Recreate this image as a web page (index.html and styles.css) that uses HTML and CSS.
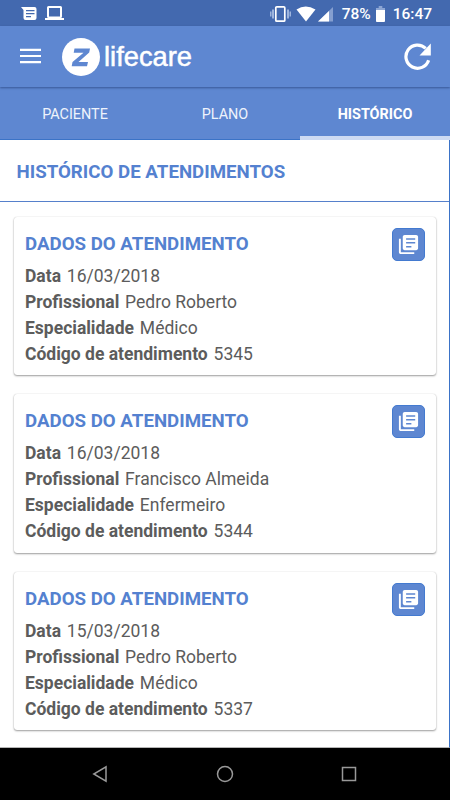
FILE: index.html
```html
<!DOCTYPE html>
<html lang="pt-BR">
<head>
<meta charset="utf-8">
<title>Lifecare</title>
<link rel="stylesheet" href="styles.css">
</head>
<body>
<svg class="defs" width="0" height="0">
  <symbol id="library" viewBox="0 0 24 24"><path fill="#fff" d="M4 6H2v14c0 1.100.9 2 2 2h14v-2H4V6zm16-4H8c-1.100 0-2 .9-2 2v12c0 1.100.9 2 2 2h12c1.100 0 2-.9 2-2V4c0-1.100-.9-2-2-2zm-1 9H9.500V9.500h9.500zm-4 4H9.500v-1.500h5.500zm4-8H9.500V5.500h9.500z"/></symbol>
</svg>
<div class="status">
  <svg class="notes" width="46" height="16" viewBox="0 0 46 16" fill="#fff">
    <path fill-rule="evenodd" d="M0 1H13.500q2 0 2 2v9q0 2-2 2H4.500q-2 0-2-2V4zM5 4v1.200h8.500V4zm0 3v1.200h8.500V7zm0 3v1.200h5V10z"/>
    <path fill-rule="evenodd" d="M27.500 0h12q1.500 0 1.500 1.500v9q0 1.500-1.500 1.500h-12q-1.500 0-1.500-1.500v-9Q26 0 27.500 0zM28 2v8.500h11V2zM24 12h19v2h-19z"/>
  </svg>
  <svg class="signals" width="66" height="18" viewBox="0 0 66 18">
    <g fill="#9db4dd"><path d="M2 4.500h2v9H2zM17 4.500h2v9h-2z"/><path d="M0 6.500h1.500v5H0zM19.500 6.500H21v5h-1.500z"/></g>
    <rect x="5.800" y="1.800" width="9" height="14.400" rx="1" fill="none" stroke="#fff" stroke-width="1.700"/>
    <path fill="#fff" d="M26.500 4.500Q35.500-1.500 45.500 4.500L36 16.500z"/>
    <path fill="#859fd0" d="M63 2v14.500H48z"/><path fill="#fff" d="M59 6v10.500H48z"/>
  </svg>
  <span class="percent">78%</span>
  <svg class="battery" width="9" height="16" viewBox="0 0 10 16" preserveAspectRatio="none"><path fill="#8ca5d3" d="M3 0h4v2h3v3H0V2h3z"/><path fill="#fff" d="M0 4h10v11q0 1-1 1H1q-1 0-1-1z"/></svg>
  <span class="clock">16:47</span>
</div>
<header class="appbar">
  <svg class="menu" width="21" height="16" viewBox="0 0 21 16"><path fill="#fff" d="M0 .8h21V3H0zM0 6.900h21v2.200H0zM0 13h21v2.200H0z"/></svg>
  <svg class="mark" width="38" height="38" viewBox="0 0 38 38"><circle cx="19" cy="19" r="19" fill="#fff"/><path fill="#5e87d1" d="M12.500 10.500H28L27.200 14.500 16.500 24h9.500l-1 4.300H9.700L10.500 24l11-9.300H11.700z"/></svg>
  <span class="brand">lifecare</span>
  <svg class="reload" width="27" height="27" viewBox="0 0 27 27"><path fill="none" stroke="#fff" stroke-width="3.200" d="M24.600 17.200A11.600 11.600 0 1 1 21.700 5.400"/><path fill="#fff" d="M26.800.5v12H15.500z"/></svg>
</header>
<nav class="tabs">
  <span class="tab">PACIENTE</span><span class="tab">PLANO</span><span class="tab active">HISTÓRICO</span>
</nav>
<main class="content">
  <h1>HISTÓRICO DE ATENDIMENTOS</h1>
  <div class="cards">
    <section class="card">
      <div class="info"><h2>DADOS DO ATENDIMENTO</h2>
        <p><b>Data</b> 16/03/2018</p><p><b>Profissional</b> Pedro Roberto</p><p><b>Especialidade</b> Médico</p><p><b>Código de atendimento</b> 5345</p></div>
      <span class="button"><svg width="23" height="23"><use href="#library"/></svg></span>
    </section>
    <section class="card">
      <div class="info"><h2>DADOS DO ATENDIMENTO</h2>
        <p><b>Data</b> 16/03/2018</p><p><b>Profissional</b> Francisco Almeida</p><p><b>Especialidade</b> Enfermeiro</p><p><b>Código de atendimento</b> 5344</p></div>
      <span class="button"><svg width="23" height="23"><use href="#library"/></svg></span>
    </section>
    <section class="card">
      <div class="info"><h2>DADOS DO ATENDIMENTO</h2>
        <p><b>Data</b> 15/03/2018</p><p><b>Profissional</b> Pedro Roberto</p><p><b>Especialidade</b> Médico</p><p><b>Código de atendimento</b> 5337</p></div>
      <span class="button"><svg width="23" height="23"><use href="#library"/></svg></span>
    </section>
  </div>
</main>
<footer class="navbar">
  <svg width="16" height="18" viewBox="0 0 16 18"><path d="M14 1.800v14.400L1.800 9z"/></svg>
  <svg width="18" height="18" viewBox="0 0 18 18"><circle cx="9" cy="9" r="7.500"/></svg>
  <svg width="16" height="16" viewBox="0 0 16 16"><rect x="1.500" y="1.500" width="13" height="13"/></svg>
</footer>
</body>
</html>
```
FILE: styles.css
```css
* { box-sizing: border-box; }
body { margin: 0; width: 450px; height: 800px; overflow: hidden; display: flex; flex-direction: column; background: #fff; font-family: Roboto, sans-serif; }
svg { display: block; flex: none; }
.defs { position: absolute; }
.status { height: 26px; flex: none; background: #4369af; color: #fff; display: flex; align-items: center; padding: 1px 18px 0 21px; font-size: 15.500px; font-weight: 500; }
.signals { margin-left: auto; }
.percent { margin-left: 6px; }
.battery { margin: 0 8px 0 5px; }
.appbar { height: 61px; flex: none; background: #5e87d1; display: flex; align-items: center; padding: 0 19px 0 20px; box-shadow: 0 1px 2px rgba(30, 55, 110, .6); position: relative; }
.menu { margin-bottom: 1px; }
.mark { margin-left: 20.500px; }
.brand { margin-left: 4.500px; color: #fff; font: 27.300px/30px "Liberation Sans", sans-serif; -webkit-text-stroke: .5px #fff; }
.reload { margin-left: auto; }
.tabs { height: 53px; flex: none; background: #5e87d1; border-bottom: 1px solid #3b73c7; display: grid; grid-template-columns: repeat(3, 1fr); }
.tab { display: flex; align-items: center; justify-content: center; color: #eef3fc; font-size: 14.400px; padding-top: 3px; }
.active { color: #fff; font-weight: 700; border-bottom: 4px solid #cddaf3; margin-bottom: -1px; padding-top: 6px; }
.content { flex: 1; min-height: 0; border-right: 1px solid #3b73c7; border-bottom: 1px solid #b5b5b5; }
h1 { margin: 0; height: 62px; border-bottom: 1px solid #5680cb; color: #5481d0; font-size: 18.700px; line-height: 65px; font-weight: 700; padding-left: 16.500px; }
.cards { padding: 15px 13px 0 14px; display: flex; flex-direction: column; gap: 19px; }
.card { height: 158.300px; border-radius: 3px; box-shadow: 0 1px 2px rgba(0, 0, 0, .38), 0 0 1px rgba(0, 0, 0, .2); display: flex; justify-content: space-between; padding: 11px 11px 0; }
.info { color: #5c5c5c; font-size: 17.500px; line-height: 26px; }
h2 { margin: 3px 0 6px; font-size: 18.700px; line-height: 26px; color: #5481d0; font-weight: 700; }
p { margin: 0; white-space: nowrap; }
b { margin-right: 1.500px; }
.button { width: 33px; height: 33px; border-radius: 5px; background: #5e87d1; border: 1px solid #437ad0; display: flex; align-items: center; justify-content: center; }
.navbar { height: 52px; flex: none; background: #000; display: flex; align-items: center; justify-content: space-between; padding: 0 93px 0 92px; }
.navbar svg { fill: none; stroke: #999; stroke-width: 1.5; }
```
